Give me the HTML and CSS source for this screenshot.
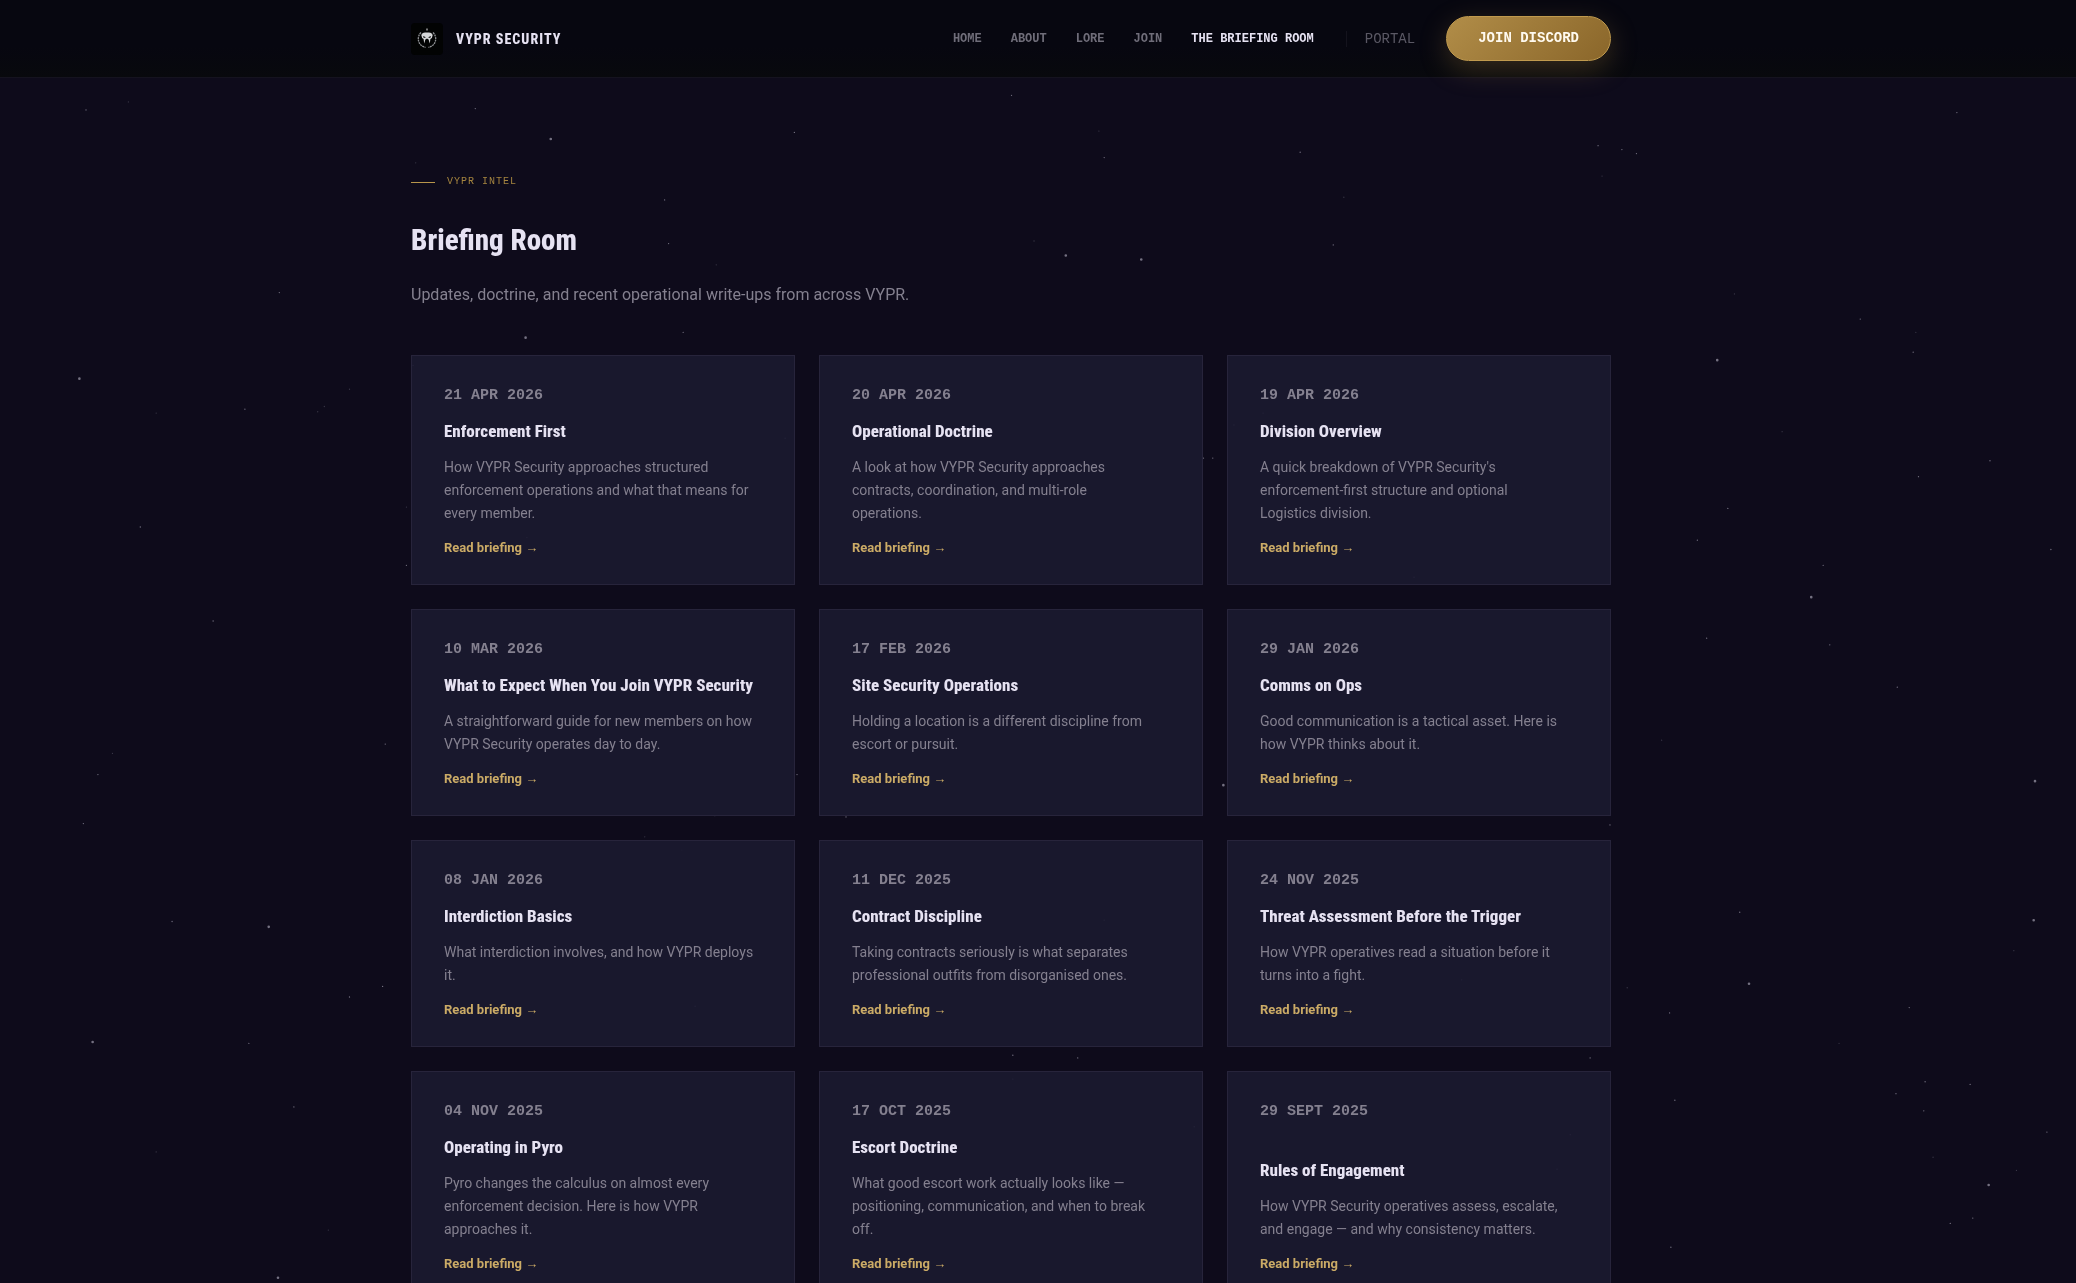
FILE: index.html
```html
<!DOCTYPE html>
<html lang="en">
<head>
<meta charset="utf-8">
<meta name="viewport" content="width=device-width, initial-scale=1">
<title>Briefing Room | VYPR Security</title>
<link rel="stylesheet" href="styles.css">
</head>
<body>
<svg class="stars" viewBox="0 0 1568 969" preserveAspectRatio="xMidYMid slice" aria-hidden="true">
<path class="star-faint" d="M97 77h0M541 200h0M118 312h0M240 311h0M245 307h0M264 294h0M85 569h0M118 870h0M248 929h0M515 642h0M487 632h0M830 99h0M1015 149h0M1310 222h0M1447 251h0M1346 326h0M1255 559h0M1521 718h0M1229 746h0M1389 788h0M1460 874h0M1523 884h0M307 383h0M314 123h0M1210 133h0M781 182h0"/>
<path class="star" d="M65 83h0M359 82h0M600 100h0M502 151h0M505 184h0M211 221h0M516 251h0M185 309h0M106 398h0M307 427h0M161 469h0M291 562h0M74 585h0M63 622h0M130 696h0M289 745h0M264 753h0M188 788h0M222 836h0M312 276h0M593 331h0M398 406h0M602 585h0M540 616h0M639 617h0M525 760h0M764 72h0M765 797h0M765 815h0M834 119h0M982 115h0M1207 110h0M1225 113h0M1236 116h0M1007 185h0M1478 85h0M1405 241h0M1445 266h0M1503 348h0M1449 360h0M1305 384h0M1282 408h0M1377 427h0M1549 415h0M1289 482h0M1382 487h0M1433 519h0M1216 623h0M1314 689h0M1261 765h0M1442 761h0M1201 799h0M814 799h0M1265 831h0M1432 826h0M1454 817h0M1488 819h0M1453 839h0M1546 855h0M1473 924h0M1490 920h0M1262 942h0M909 346h0M916 346h0M932 321h0M954 312h0M1068 436h0M834 695h0M1104 740h0M1186 857h0M1176 883h0M902 851h0"/>
<path class="star-bright" d="M416 105h0M397 255h0M60 286h0M203 700h0M70 787h0M210 965h0M805 193h0M862 196h0M1297 272h0M1368 451h0M1537 590h0M924 593h0M1536 695h0M1321 743h0M1502 895h0"/>
</svg>

<header class="site-header">
<div class="wrap header-row">
<a class="brand" href="#">
<svg class="brand-mark" viewBox="0 0 32 32" aria-hidden="true">
<rect width="32" height="32" rx="4" fill="#020303"/>
<g fill="none" stroke="#8f9194" stroke-width="1.3" stroke-dasharray="2 .6"><path d="M10 9.500c-4 4-3.500 10 1 13.500l3.500 1.500M22 9.500c4 4 3.500 10-1 13.500l-3.500 1.500"/></g>
<path fill="#d5d6d8" d="M16 9.500c2.600 0 4.600.2 5.700 2.400l-.8 3-1.500 1-.6 4.600-1.200-4L16 15.400l-1.600 1.100-1.200 4-.6-4.600-1.500-1-.8-3c1.100-2.200 3.100-2.400 5.700-2.400z"/>
<path fill="#020303" d="M12 13l3 1.200-2.200.8zM20 13l-3 1.200 2.200.8z"/>
<path fill="#a6a7a9" d="M15.300 5.500h1.400v2h-1.400z"/>
</svg>
<span>VYPR SECURITY</span>
</a>
<nav class="nav" aria-label="Main">
<a href="#">HOME</a>
<a href="#">ABOUT</a>
<a href="#">LORE</a>
<a href="#">JOIN</a>
<a class="active" href="#" aria-current="page">THE BRIEFING ROOM</a>
</nav>
<a class="portal" href="#">PORTAL</a>
<a class="discord" href="#">JOIN DISCORD</a>
</div>
</header>

<main class="wrap main">
<p class="eyebrow">VYPR INTEL</p>
<h1 class="title">Briefing Room</h1>
<p class="lead">Updates, doctrine, and recent operational write-ups from across VYPR.</p>
<section class="grid" aria-label="Briefings">
<article class="card"><time class="date" datetime="2026-04-21">21 APR 2026</time><h2 class="card-title">Enforcement First</h2><p class="text">How VYPR Security approaches structured enforcement operations and what that means for every member.</p><a class="more" href="#">Read briefing →</a></article>
<article class="card"><time class="date" datetime="2026-04-20">20 APR 2026</time><h2 class="card-title">Operational Doctrine</h2><p class="text">A look at how VYPR Security approaches contracts, coordination, and multi-role<br>operations.</p><a class="more" href="#">Read briefing →</a></article>
<article class="card"><time class="date" datetime="2026-04-19">19 APR 2026</time><h2 class="card-title">Division Overview</h2><p class="text">A quick breakdown of VYPR Security's enforcement-first structure and optional<br>Logistics division.</p><a class="more" href="#">Read briefing →</a></article>
<article class="card"><time class="date" datetime="2026-03-10">10 MAR 2026</time><h2 class="card-title">What to Expect When You Join VYPR Security</h2><p class="text">A straightforward guide for new members on how VYPR Security operates day to day.</p><a class="more" href="#">Read briefing →</a></article>
<article class="card"><time class="date" datetime="2026-02-17">17 FEB 2026</time><h2 class="card-title">Site Security Operations</h2><p class="text">Holding a location is a different discipline from escort or pursuit.</p><a class="more" href="#">Read briefing →</a></article>
<article class="card"><time class="date" datetime="2026-01-29">29 JAN 2026</time><h2 class="card-title">Comms on Ops</h2><p class="text">Good communication is a tactical asset. Here is how VYPR thinks about it.</p><a class="more" href="#">Read briefing →</a></article>
<article class="card"><time class="date" datetime="2026-01-08">08 JAN 2026</time><h2 class="card-title">Interdiction Basics</h2><p class="text">What interdiction involves, and how VYPR deploys it.</p><a class="more" href="#">Read briefing →</a></article>
<article class="card"><time class="date" datetime="2025-12-11">11 DEC 2025</time><h2 class="card-title">Contract Discipline</h2><p class="text">Taking contracts seriously is what separates professional outfits from disorganised ones.</p><a class="more" href="#">Read briefing →</a></article>
<article class="card"><time class="date" datetime="2025-11-24">24 NOV 2025</time><h2 class="card-title">Threat Assessment Before the Trigger</h2><p class="text">How VYPR operatives read a situation before it turns into a fight.</p><a class="more" href="#">Read briefing →</a></article>
<article class="card"><time class="date" datetime="2025-11-04">04 NOV 2025</time><h2 class="card-title">Operating in Pyro</h2><p class="text">Pyro changes the calculus on almost every enforcement decision. Here is how VYPR approaches it.</p><a class="more" href="#">Read briefing →</a></article>
<article class="card"><time class="date" datetime="2025-10-17">17 OCT 2025</time><h2 class="card-title">Escort Doctrine</h2><p class="text">What good escort work actually looks like — positioning, communication, and when to break<br>off.</p><a class="more" href="#">Read briefing →</a></article>
<article class="card"><time class="date" datetime="2025-09-29">29 SEPT 2025</time><h2 class="card-title">Rules of Engagement</h2><p class="text">How VYPR Security operatives assess, escalate, and engage — and why consistency matters.</p><a class="more" href="#">Read briefing →</a></article>
</section>
</main>
</body>
</html>
```
FILE: styles.css
```css
:root {
  --bg: #0e0b1b;
  --text: #e6e2f2;
  --muted: #84808f;
  --gold: #cbab66;
  --sans: Roboto, "Liberation Sans", sans-serif;
  --narrow: "Roboto Condensed", "Liberation Sans Narrow", "Noto Sans", sans-serif;
  --mono: "Liberation Mono", monospace;
}
* { box-sizing: border-box; }
body {
  margin: 0;
  background: var(--bg);
  color: var(--text);
  font-family: var(--sans);
}
a { color: inherit; text-decoration: none; }
h1, h2, p { margin: 0; }

.stars {
  position: fixed;
  inset: 0;
  z-index: -1;
  width: 100%;
  height: 100%;
  fill: none;
  stroke: #b9b6c6;
  stroke-linecap: round;
}
.star-faint { stroke-width: 1; opacity: .25; }
.star { stroke-width: 1; opacity: .6; }
.star-bright { stroke-width: 2; opacity: .6; }

.wrap {
  max-width: 1254px;
  margin: 0 auto;
  padding-right: 54px;
}
.site-header {
  position: sticky;
  top: 0;
  z-index: 2;
  background: linear-gradient(#070710 60%, #08090d);
  border-bottom: 1px solid #15131f;
}
.header-row {
  display: flex;
  align-items: center;
  height: 77px;
}
.brand {
  display: flex;
  align-items: center;
  gap: 13px;
  margin-right: auto;
  font: 800 14px/24px var(--narrow);
  letter-spacing: 1px;
}
.brand-mark { width: 32px; height: 32px; }
.nav {
  display: flex;
  gap: 29px;
  font: 700 12px/16px var(--mono);
  color: #6f6d79;
}
.nav .active { color: #e6e2f2; }
.portal {
  margin-left: 32px;
  padding-left: 18px;
  border-left: 1px solid #14131d;
  font: 400 14px/16px var(--mono);
  color: #5a5864;
}
.discord {
  margin-left: 31px;
  padding: 0 31px;
  border: 1px solid #c09a4e;
  border-radius: 23px;
  background: linear-gradient(135deg, #b18d48, #8a662a);
  box-shadow: 0 8px 28px rgba(176, 138, 60, .28);
  font: 700 14px/43px var(--mono);
  color: #fffaf0;
}

.main { padding-top: 96px; padding-bottom: 96px; }
.eyebrow {
  display: flex;
  align-items: center;
  gap: 12px;
  font: 400 10px/16px var(--mono);
  letter-spacing: 1px;
  color: #a5853f;
}
.eyebrow::before {
  content: "";
  width: 24px;
  height: 1px;
  background: #b8964b;
}
.title {
  margin-top: 30px;
  font: 800 29px/40px var(--narrow);
}
.lead {
  margin-top: 21px;
  font-size: 16px;
  line-height: 28px;
  color: var(--muted);
}
.grid {
  display: grid;
  grid-template-columns: repeat(auto-fit, minmax(320px, 1fr));
  gap: 24px;
  margin-top: 46px;
}
.card {
  display: flex;
  flex-direction: column;
  align-items: flex-start;
  padding: 28px 32px;
  border: 1px solid #27243b;
  background: rgba(27, 25, 48, .9);
}
.date {
  margin-bottom: 12px;
  font: 700 15px/23px var(--mono);
  color: var(--muted);
}
.card-title {
  margin-top: auto;
  font: 800 17px/24px var(--narrow);
}
.text {
  margin: 13px 0 15px;
  font-size: 14px;
  line-height: 23px;
  color: var(--muted);
}
.more {
  font-size: 13px;
  font-weight: 700;
  line-height: 16px;
  color: var(--gold);
}
```
